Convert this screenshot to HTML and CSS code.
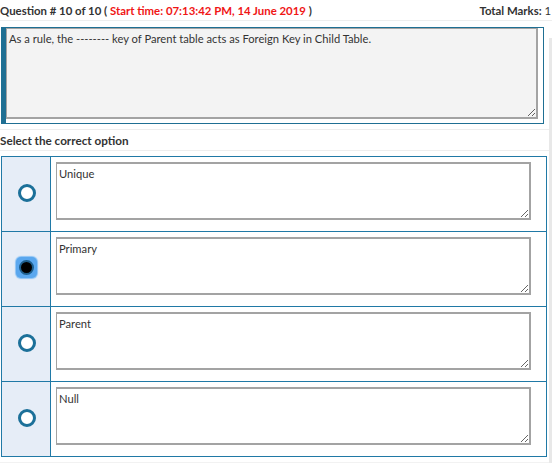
FILE: index.html
```html
<!DOCTYPE html>
<html>
<head>
<meta charset="utf-8">
<link rel="stylesheet" href="styles.css">
</head>
<body>
<div class="page">
  <div class="header">
    <div class="q-title">Question # 10 of 10 ( <span class="start">Start time: 07:13:42 PM, 14 June 2019</span> )</div>
    <div class="marks">Total Marks: <span class="num">1</span></div>
  </div>
  <div class="question">
    <textarea class="q-text" readonly>As a rule, the -------- key of Parent table acts as Foreign Key in Child Table.</textarea>
  </div>
  <div class="select-head">Select the correct option</div>
  <div class="options">
    <div class="opt">
      <div class="opt-radio"><span class="radio"></span></div>
      <div class="opt-body"><textarea class="opt-text" readonly>Unique</textarea></div>
    </div>
    <div class="opt">
      <div class="opt-radio"><span class="focus"><span class="radio checked"></span></span></div>
      <div class="opt-body"><textarea class="opt-text" readonly>Primary</textarea></div>
    </div>
    <div class="opt">
      <div class="opt-radio"><span class="radio"></span></div>
      <div class="opt-body"><textarea class="opt-text" readonly>Parent</textarea></div>
    </div>
    <div class="opt">
      <div class="opt-radio"><span class="radio"></span></div>
      <div class="opt-body"><textarea class="opt-text" readonly>Null</textarea></div>
    </div>
  </div>
  <div class="footer-strip"></div>
  <div class="side-bar"></div>
</div>
</body>
</html>
```

FILE: styles.css
```css
html, body {
  margin: 0;
  padding: 0;
  background: #fff;
}
body {
  font-family: "Source Sans Pro", "Lato", "Liberation Sans", sans-serif;
  color: #333;
  font-size: 12px;
}
.page {
  position: relative;
  width: 552px;
  height: 463px;
  overflow: hidden;
}
.header {
  display: flex;
  justify-content: space-between;
  align-items: center;
  height: 20px;
  border-bottom: 1px solid #eee;
  font-weight: bold;
  font-size: 11.4px;
}
.start { color: #f01616; }
.marks { padding-right: 1px; }
.marks .num { font-weight: normal; }
.question {
  margin: 6px 0 0 1px;
  width: 532px;
  border: 1px solid #1f6f93;
  border-left: 5px solid #1f6f93;
  padding: 0 5px 4px 0;
}
.q-text {
  display: block;
  box-sizing: border-box;
  width: 532px;
  height: 91px;
  margin: 0;
  border: 2px solid #a3a3a3;
  border-top-width: 1px;
  border-left-width: 1px;
  background: #f3f3f3;
  font-family: inherit;
  font-size: 11.2px;
  color: #333;
  padding: 3px 2px;
  resize: both;
  outline: none;
}
.select-head {
  margin-top: 5px;
  border-top: 1px solid #eee;
  border-bottom: 1px solid #eee;
  height: 20px;
  line-height: 21px;
  font-weight: bold;
  font-size: 11.7px;
}
.options {
  margin: 5px 0 0 1px;
  width: 544px;
  border: 1px solid #2079a6;
  border-bottom: none;
}
.opt {
  display: flex;
  height: 74px;
  border-bottom: 1px solid #2079a6;
}
.opt-radio {
  width: 49px;
  background: #e6edf7;
  border-right: 1px solid #2079a6;
  display: flex;
  justify-content: center;
  align-items: flex-start;
  padding-top: 27px;
  box-sizing: border-box;
}
.radio {
  display: block;
  width: 12px;
  height: 12px;
  border: 3px solid #1c7099;
  border-radius: 50%;
  background: #fff;
  margin-left: 1px;
}
.focus {
  display: flex;
  align-items: center;
  justify-content: center;
  width: 21px;
  height: 21px;
  margin-top: -2px;
  margin-left: 1px;
  border-radius: 5px;
  background: #5aa7ee;
  box-shadow: 0 0 1px 1px #8cc3f4;
}
.radio.checked {
  width: 11px;
  height: 11px;
  border: 2px solid #1e5f8e;
  background: #000;
  margin: 0;
}
.opt-body {
  flex: 1;
  padding: 5px 0 0 5px;
}
.opt-text {
  display: block;
  box-sizing: border-box;
  width: 475px;
  height: 58px;
  margin: 0;
  border: 2px solid #a3a3a3;
  border-top-width: 2px;
  border-left-width: 1px;
  background: #fff;
  font-family: inherit;
  font-size: 11.2px;
  color: #333;
  padding: 3px 2px;
  resize: both;
  outline: none;
}
.footer-strip {
  margin-top: 5px;
  height: 4px;
  background: #f2f2f2;
}
.side-bar {
  position: absolute;
  right: 0;
  top: 38px;
  width: 3px;
  bottom: 0;
  background: #e8e8e8;
}
```
